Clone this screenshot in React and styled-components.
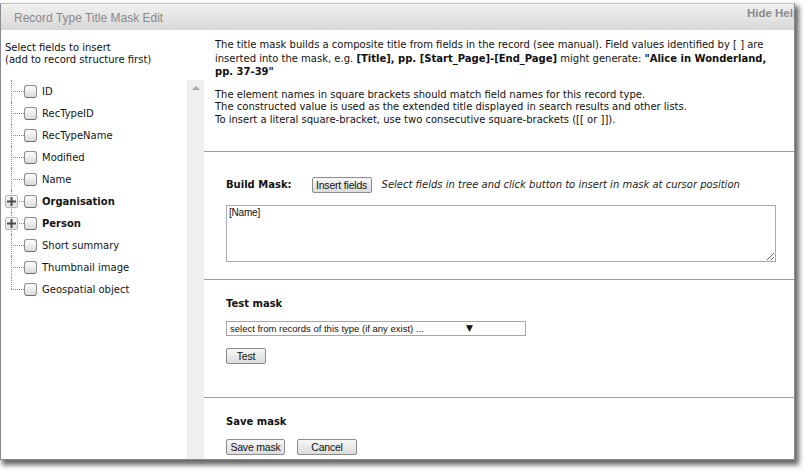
import React from "react";
import styled, { createGlobalStyle } from "styled-components";

const Global = createGlobalStyle`
  html, body { margin: 0; padding: 0; background: #ffffff; overflow: hidden; }
  body { font-family: "DejaVu Sans", Verdana, sans-serif; font-size: 10px; color: #111; }
  * { box-sizing: border-box; }
`;

const Page = styled.div`
  width: 808px;
  height: 475px;
  padding-top: 3px;
`;

const Window = styled.div`
  width: 795px;
  height: 457px;
  border: 1px solid #8a8a8a;
  border-top-color: #c4c4c4;
  background: #fff;
  box-shadow: 3px 4px 5px 1px rgba(0, 0, 0, 0.6);
  display: flex;
  flex-direction: column;
  overflow: hidden;
`;

const TitleBar = styled.div`
  height: 26px;
  flex: none;
  display: flex;
  justify-content: space-between;
  align-items: center;
  padding-left: 13px;
  background: linear-gradient(#f1f1f1, #d7d7d7);
  font-family: "Liberation Sans", Arial, sans-serif;
  color: #8a8a8a;
  white-space: nowrap;
`;

const Title = styled.span`
  font-size: 12px;
  padding-top: 1px;
`;

const HideHelp = styled.span`
  align-self: flex-start;
  font-size: 11.5px;
  font-weight: bold;
  padding-top: 3px;
  margin-right: -6px;
`;

const Body = styled.div`
  flex: 1;
  display: flex;
  min-height: 0;
`;

const LeftPane = styled.div`
  width: 203px;
  flex: none;
  display: flex;
  flex-direction: column;
`;

const LeftIntro = styled.div`
  padding: 12px 0 0 4px;
  line-height: 12px;
  color: #111;
`;

const TreeArea = styled.div`
  flex: 1;
  display: flex;
  margin-top: 14px;
`;

const Tree = styled.ul`
  flex: 1;
  list-style: none;
  margin: 0;
  padding: 0;
`;

const TreeItem = styled.li`
  position: relative;
  height: 22px;
  display: flex;
  align-items: center;
  padding-left: 23px;
  font-weight: ${(p) => (p.$bold ? "bold" : "normal")};
  color: #141414;

  &::before {
    content: "";
    position: absolute;
    left: 10px;
    top: 0;
    height: ${(p) => (p.$last ? "50%" : "100%")};
    border-left: 1px dotted #8a8a8a;
  }
  &::after {
    content: "";
    position: absolute;
    left: 10px;
    top: 50%;
    width: 13px;
    border-top: 1px dotted #8a8a8a;
  }
`;

const Expander = styled.span`
  position: absolute;
  left: 4px;
  top: 5px;
  width: 13px;
  height: 13px;
  border: 1px solid #b4b4b4;
  border-radius: 2px;
  background: linear-gradient(#f8f8f8, #e2e2e2);
  z-index: 1;
  display: flex;
  align-items: center;
  justify-content: center;
`;

const Check = styled.span`
  width: 13px;
  height: 13px;
  flex: none;
  border: 1px solid #8e8e8e;
  border-bottom-color: #6f6f6f;
  border-radius: 3px;
  background: linear-gradient(#fefefe, #dadada);
  margin-right: 5px;
`;

const ScrollStrip = styled.div`
  width: 17px;
  flex: none;
  background: #f0f0f0;
  display: flex;
  justify-content: center;
  padding-top: 6px;
`;

const UpArrow = styled.span`
  width: 0;
  height: 0;
  border-left: 4px solid transparent;
  border-right: 4px solid transparent;
  border-bottom: 4px solid #a6a6a6;
`;

const Main = styled.div`
  flex: 1;
  display: flex;
  flex-direction: column;
  min-width: 0;
`;

const Help = styled.div`
  padding: 8px 14px 24px 11px;
`;

const HelpPara = styled.p`
  margin: 0 0 ${(p) => p.$gap || 0}px 0;
  line-height: ${(p) => p.$lh || 13}px;
  white-space: nowrap;
`;

const Section = styled.div`
  border-top: 1px solid #9d9d9d;
  padding: ${(p) => p.$pad};
`;

const Row = styled.div`
  display: flex;
  align-items: center;
  gap: ${(p) => p.$gap || 0}px;
`;

const Label = styled.span`
  font-weight: bold;
  line-height: 13px;
  margin-right: ${(p) => p.$mr || 0}px;
`;

const Hint = styled.span`
  font-style: italic;
  color: #222;
  margin-left: ${(p) => p.$ml || 0}px;
`;

const Button = styled.button`
  height: 16px;
  width: ${(p) => p.$w}px;
  padding: 0;
  border: 1px solid #8b8b8b;
  border-radius: 2px;
  background: linear-gradient(#f7f7f7, #dcdcdc);
  font-family: "Liberation Sans", Arial, sans-serif;
  font-size: 10.5px;
  letter-spacing: -0.2px;
  color: #111;
  line-height: 14px;
`;

const TextArea = styled.textarea`
  display: block;
  width: 550px;
  height: 57px;
  margin-top: 12px;
  border: 1px solid #a9a9a9;
  padding: 1px 2px;
  font-family: "Liberation Sans", Arial, sans-serif;
  font-size: 10px;
  letter-spacing: -0.2px;
  color: #111;
  resize: both;
  outline: none;
`;

const SelectWrap = styled.div`
  position: relative;
  width: 300px;
  height: 15px;
  margin-top: 11px;
`;

const Select = styled.select`
  appearance: none;
  -webkit-appearance: none;
  width: 100%;
  height: 100%;
  border: 1px solid #a6a6a6;
  border-radius: 0;
  background: #fff;
  padding: 0 0 0 3px;
  font-family: "Liberation Sans", Arial, sans-serif;
  font-size: 9.5px;
  color: #111;
  outline: none;
`;

const SelectArrow = styled.span`
  position: absolute;
  left: 240px;
  top: 2px;
  font-size: 9px;
  line-height: 10px;
  color: #111;
  pointer-events: none;
`;

const Stack = styled.div`
  margin-top: ${(p) => p.$mt || 12}px;
`;

const fields = [
  { name: "ID" },
  { name: "RecTypeID" },
  { name: "RecTypeName" },
  { name: "Modified" },
  { name: "Name" },
  { name: "Organisation", bold: true, expandable: true },
  { name: "Person", bold: true, expandable: true },
  { name: "Short summary" },
  { name: "Thumbnail image" },
  { name: "Geospatial object" },
];

function PlusIcon() {
  return (
    <svg width="9" height="9" viewBox="0 0 9 9">
      <rect x="0" y="3.5" width="9" height="2" fill="#4a4a4a" />
      <rect x="3.5" y="0" width="2" height="9" fill="#4a4a4a" />
    </svg>
  );
}

export default function App() {
  return (
    <Page>
      <Global />
      <Window>
        <TitleBar>
          <Title>Record Type Title Mask Edit</Title>
          <HideHelp>Hide Help</HideHelp>
        </TitleBar>
        <Body>
          <LeftPane>
            <LeftIntro>
              Select fields to insert
              <br />
              (add to record structure first)
            </LeftIntro>
            <TreeArea>
              <Tree>
                {fields.map((f, i) => (
                  <TreeItem key={f.name} $bold={f.bold} $last={i === fields.length - 1}>
                    {f.expandable && (
                      <Expander>
                        <PlusIcon />
                      </Expander>
                    )}
                    <Check />
                    {f.name}
                  </TreeItem>
                ))}
              </Tree>
              <ScrollStrip>
                <UpArrow />
              </ScrollStrip>
            </TreeArea>
          </LeftPane>
          <Main>
            <Help>
              <HelpPara $gap={10} $lh={13.5}>
                <span>
                  The title mask builds a composite title from fields in the record (see manual). Field values
                  identified by [ ] are
                </span>
                <br />
                <span>inserted into the mask, e.g. </span>
                <b>[Title], pp. [Start_Page]-[End_Page]</b>
                <span> might generate: </span>
                <b>"Alice in Wonderland,</b>
                <br />
                <b>pp. 37-39"</b>
              </HelpPara>
              <HelpPara $lh={12.7}>
                The element names in square brackets should match field names for this record type.
                <br />
                The constructed value is used as the extended title displayed in search results and other lists.
                <br />
                To insert a literal square-bracket, use two consecutive square-brackets ([[ or ]]).
              </HelpPara>
            </Help>
            <Section $pad="25px 0 17px 22px">
              <Row>
                <Label $mr={20}>Build Mask:</Label>
                <Button $w={60}>Insert fields</Button>
                <Hint $ml={10}>
                  Select fields in tree and click button to insert in mask at cursor position
                </Hint>
              </Row>
              <TextArea defaultValue="[Name]" />
            </Section>
            <Section $pad="17px 0 33px 22px">
              <Label>Test mask</Label>
              <SelectWrap>
                <Select defaultValue="">
                  <option value="">select from records of this type (if any exist) ...</option>
                </Select>
                <SelectArrow>▼</SelectArrow>
              </SelectWrap>
              <Stack>
                <Button $w={40}>Test</Button>
              </Stack>
            </Section>
            <Section $pad="17px 0 0 22px">
              <Label>Save mask</Label>
              <Stack $mt={11}>
                <Row $gap={12}>
                  <Button $w={59}>Save mask</Button>
                  <Button $w={60}>Cancel</Button>
                </Row>
              </Stack>
            </Section>
          </Main>
        </Body>
      </Window>
    </Page>
  );
}
